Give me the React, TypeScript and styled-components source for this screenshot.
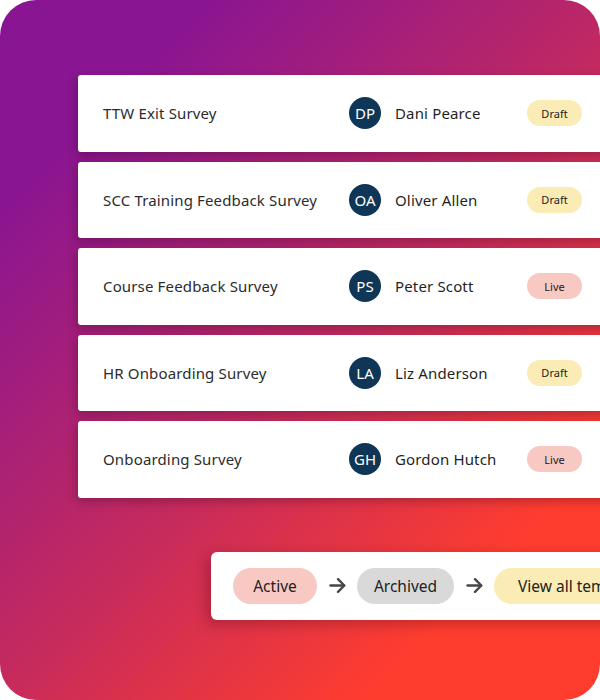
import React from "react";
import styled, { createGlobalStyle } from "styled-components";

const Global = createGlobalStyle`
  html, body { margin: 0; padding: 0; background: #ffffff; }
  body { font-family: "Noto Sans", "Open Sans", sans-serif; }
`;

const Panel = styled.div`
  width: 600px;
  height: 700px;
  border-radius: 36px;
  overflow: hidden;
  background: linear-gradient(135deg, #8a1592 0%, #8a1592 16%, #c42a5e 52%, #ff3d2e 82%, #ff3d2e 100%);
  padding: 75px 0 0 78px;
  box-sizing: border-box;
  display: flex;
  flex-direction: column;
`;

const List = styled.div`
  display: flex;
  flex-direction: column;
  gap: 10px;
`;

const Card = styled.div`
  width: 560px;
  height: 76.5px;
  flex: none;
  background: #fff;
  border-radius: 3px;
  box-shadow: -2px 4px 10px rgba(40, 0, 30, 0.28);
  display: flex;
  align-items: center;
  padding-left: 25px;
  box-sizing: border-box;
`;

const Title = styled.div`
  width: 246px;
  font-size: 15px;
  letter-spacing: 0.15px;
  color: #2c2c2c;
  white-space: nowrap;
`;

const Avatar = styled.div`
  width: 32px;
  height: 32px;
  border-radius: 50%;
  background: #0f3656;
  color: #fff;
  font-size: 15px;
  display: flex;
  align-items: center;
  justify-content: center;
  flex: none;
`;

const Name = styled.div`
  width: 132px;
  margin-left: 14px;
  font-size: 15px;
  letter-spacing: 0.15px;
  color: #1f1f1f;
  white-space: nowrap;
`;

const Badge = styled.div<{ $live?: boolean }>`
  width: 55px;
  height: 26px;
  border-radius: 13px;
  background: ${(p) => (p.$live ? "#f8c8c3" : "#faecb4")};
  color: #222;
  font-size: 11px;
  display: flex;
  align-items: center;
  justify-content: center;
  flex: none;
`;

const Bar = styled.div`
  margin: 54px 0 0 133px;
  width: 460px;
  height: 68px;
  flex: none;
  background: #fff;
  border-radius: 6px;
  box-shadow: -4px 4px 14px rgba(60, 0, 20, 0.3);
  display: flex;
  align-items: center;
  padding-left: 22px;
  box-sizing: border-box;
`;

const Pill = styled.div<{ $bg: string; $w?: number }>`
  height: 36px;
  ${(p) => (p.$w ? `width: ${p.$w}px;` : "padding: 0 24px;")}
  border-radius: 18px;
  background: ${(p) => p.$bg};
  color: #222;
  font-size: 15.5px;
  display: flex;
  align-items: center;
  justify-content: ${(p) => (p.$w ? "center" : "flex-start")};
  white-space: nowrap;
  flex: none;
`;

const ArrowBox = styled.span`
  flex: none;
  display: flex;
  align-items: center;
  margin: 0 11px 0 12px;
`;

const Arrow = () => (
  <ArrowBox>
    <svg width="17" height="17" viewBox="0 0 17 17" fill="none" stroke="#474747" strokeWidth="2.4" strokeLinecap="round" strokeLinejoin="round">
      <path d="M1.5 8.5h13.5" />
      <path d="M9 2.2l6.3 6.3-6.3 6.3" />
    </svg>
  </ArrowBox>
);

const rows = [
  { t: "TTW Exit Survey", i: "DP", n: "Dani Pearce", live: false },
  { t: "SCC Training Feedback Survey", i: "OA", n: "Oliver Allen", live: false },
  { t: "Course Feedback Survey", i: "PS", n: "Peter Scott", live: true },
  { t: "HR Onboarding Survey", i: "LA", n: "Liz Anderson", live: false },
  { t: "Onboarding Survey", i: "GH", n: "Gordon Hutch", live: true },
];

export default function App() {
  return (
    <>
      <Global />
      <Panel>
        <List>
          {rows.map((r) => (
            <Card key={r.t}>
              <Title>{r.t}</Title>
              <Avatar>{r.i}</Avatar>
              <Name>{r.n}</Name>
              <Badge $live={r.live}>{r.live ? "Live" : "Draft"}</Badge>
            </Card>
          ))}
        </List>
        <Bar>
          <Pill $bg="#f8c8c3" $w={84}>Active</Pill>
          <Arrow />
          <Pill $bg="#d9d9d9" $w={97}>Archived</Pill>
          <Arrow />
          <Pill $bg="#faecb4">View all templates</Pill>
        </Bar>
      </Panel>
    </>
  );
}
